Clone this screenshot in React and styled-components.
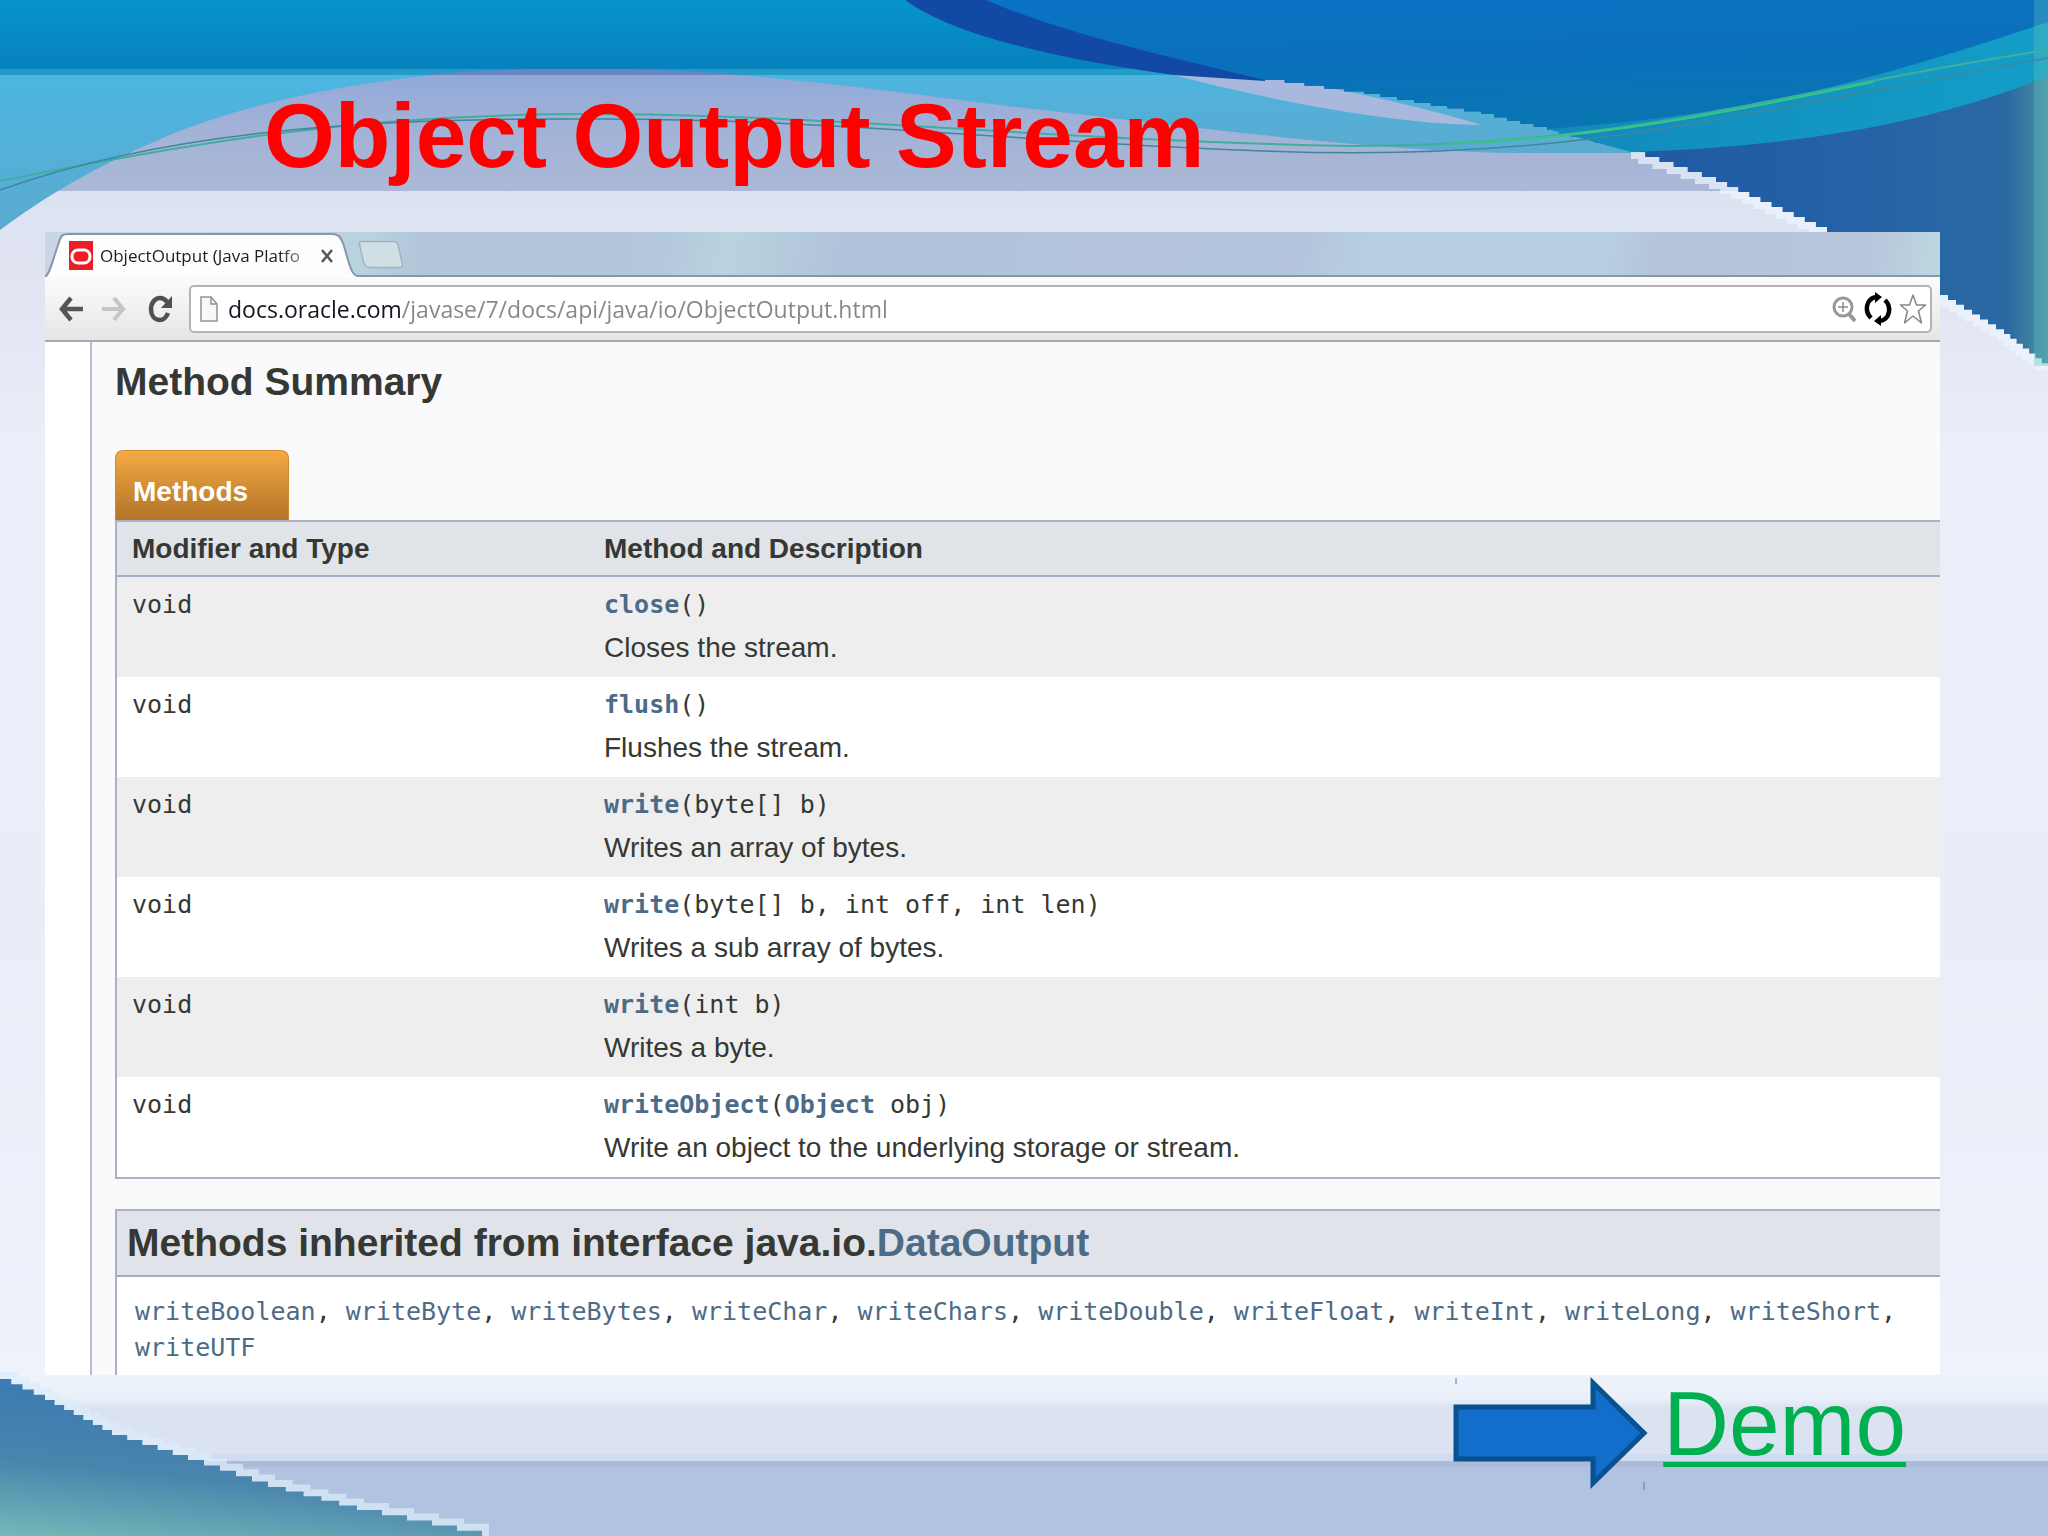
import styled, { createGlobalStyle } from 'styled-components';

const GlobalStyle = createGlobalStyle`
  * {
    box-sizing: border-box;
  }

  body {
    margin: 0;
    font-family: "Liberation Sans", Arial, sans-serif;
    background: #e9eef8;
  }
`;

const Slide = styled.main`
  position: relative;
  isolation: isolate;
  display: flex;
  flex-direction: column;
  min-height: 100vh;
  overflow: hidden;
`;

const Backdrop = styled.svg`
  position: absolute;
  inset: 0;
  z-index: -1;
  width: 100%;
  height: 100%;
`;

const Title = styled.h1`
  margin: 0;
  padding: 84px 264px 44px;
  font-size: 91px;
  line-height: 104px;
  color: #ff0000;
`;

const Browser = styled.section`
  margin: 0 108px 0 45px;
  background: #ffffff;
  overflow: hidden;
`;

const TabStrip = styled.div`
  display: flex;
  align-items: stretch;
  height: 45px;
  border-bottom: 2px solid #8a97a6;
  background: linear-gradient(100deg, #c9d6e6 0%, #b9d2e0 17%, #b2c5da 20%, #b3c6dc 32%, #b9d3df 36%, #b1c3da 42%, #b3c4dc 66%, #b8d0e3 70%, #b9d0e4 82%, #b5c3da 85%, #b8c6dc 96%, #bdd8e0 100%);
`;

const Tab = styled.div`
  position: relative;
  isolation: isolate;
  display: flex;
  align-items: center;
  gap: 7px;
  width: 313px;
  height: 45px;
  padding: 2px 20px 0 24px;
  font-family: "Open Sans", "Noto Sans", sans-serif;
  font-size: 17px;
  color: #1c1c28;
`;

const TabShape = styled.svg`
  position: absolute;
  inset: 0;
  z-index: -1;
  width: 100%;
  height: 100%;
`;

const TabName = styled.span`
  width: 211px;
  white-space: nowrap;
  mask-image: linear-gradient(90deg, #000 85%, rgba(0, 0, 0, 0.3));
`;

const IconButton = styled.button`
  display: grid;
  place-items: center;
  flex: none;
  padding: 0;
  border: none;
  background: none;
  cursor: pointer;

  svg {
    display: block;
  }
`;

const Toolbar = styled.div`
  display: flex;
  align-items: center;
  gap: 14px;
  height: 65px;
  padding: 0 8px 0 12px;
  border-bottom: 2px solid #a9a9ac;
  background: linear-gradient(#fbfbfc, #e7e6e7);
`;

const AddressBar = styled.div`
  display: flex;
  flex: 1;
  align-items: center;
  gap: 4px;
  height: 48px;
  padding: 0 2px 0 8px;
  border: 2px solid #b4b4b8;
  border-radius: 5px;
  background: #ffffff;
`;

const AddressInput = styled.input`
  flex: 1;
  min-width: 0;
  height: 40px;
  padding: 0 0 0 5px;
  border: none;
  outline: none;
  font-family: "Open Sans", "Noto Sans", sans-serif;
  font-size: 23px;
  color: #1f2230;
  background: linear-gradient(90deg, #14161f 179px, #85858a 179px);
  background-clip: text;
  -webkit-text-fill-color: transparent;
`;

const Docs = styled.div`
  margin-left: 45px;
  padding-left: 23px;
  border-left: 2px solid #b9b9d2;
  background: #faf9fc;
  color: #353833;
`;

const SectionTitle = styled.h2`
  margin: 0;
  padding: 18px 0 46px;
  font-size: 39px;
  line-height: 44px;
`;

const MethodsTab = styled.button`
  display: block;
  width: 174px;
  height: 70px;
  padding: 12px 17px 0;
  border: 1px solid #d08a2c;
  border-bottom: none;
  border-radius: 8px 8px 0 0;
  background: linear-gradient(#f5aa43, #b27428);
  color: #ffffff;
  font: bold 28px "Liberation Sans", Arial, sans-serif;
  text-align: left;
`;

const MethodTable = styled.table`
  width: 100%;
  border: 2px solid #aab0c6;
  border-right: none;
  border-collapse: separate;
  border-spacing: 0;
  table-layout: fixed;

  th {
    height: 55px;
    padding: 0 15px;
    border-bottom: 2px solid #a5b0c6;
    background: #e0e3e8;
    font-size: 28px;
    line-height: 40px;
    text-align: left;
  }

  th:first-child {
    width: 472px;
  }

  td {
    height: 100px;
    padding: 6px 15px;
    background: #ffffff;
    vertical-align: top;
  }

  tbody tr:nth-child(odd) td {
    background: #eeeeef;
  }
`;

const Code = styled.code`
  display: block;
  font-family: "DejaVu Sans Mono", monospace;
  font-size: 25px;
  line-height: ${(props) => props.$line || 44}px;
`;

const Description = styled.div`
  font-size: 28px;
  line-height: 42px;
`;

const DocLink = styled.a`
  color: #4c6b87;
  font-weight: ${(props) => (props.$strong ? 'bold' : 'inherit')};
  text-decoration: none;
`;

const Inherited = styled.section`
  margin-top: 30px;
  border: 2px solid #aab0c6;
  border-right: none;
  border-bottom: none;
  background: #ffffff;
`;

const InheritedTitle = styled.h3`
  margin: 0;
  padding: 10px;
  border-bottom: 2px solid #a5a8c2;
  background: #e0e3e9;
  font-size: 39px;
  line-height: 44px;
`;

const InheritedList = styled.div`
  padding: 17px 18px 9px;
`;

const Footer = styled.footer`
  display: flex;
  align-items: flex-start;
  justify-content: flex-end;
  gap: 14px;
  padding: 0 142px 20px 0;
`;

const DemoLink = styled.a`
  font-size: 91px;
  line-height: 98px;
  color: #00b050;
  text-decoration-thickness: 5px;
  text-underline-offset: 7px;
`;

const methods = [
  { name: 'close', args: '()', text: 'Closes the stream.' },
  { name: 'flush', args: '()', text: 'Flushes the stream.' },
  { name: 'write', args: '(byte[] b)', text: 'Writes an array of bytes.' },
  { name: 'write', args: '(byte[] b, int off, int len)', text: 'Writes a sub array of bytes.' },
  { name: 'write', args: '(int b)', text: 'Writes a byte.' },
  {
    name: 'writeObject',
    args: <>(<DocLink href="#Object" $strong>Object</DocLink> obj)</>,
    text: 'Write an object to the underlying storage or stream.',
  },
];

const inherited = [
  'writeBoolean', 'writeByte', 'writeBytes', 'writeChar', 'writeChars', 'writeDouble',
  'writeFloat', 'writeInt', 'writeLong', 'writeShort', 'writeUTF',
];

// turns a line of points into the coarse stairs of the wave edges
const stairs = (points, step) => {
  let d = '';
  for (let i = 0; i < points.length - 1; i++) {
    const [x1, y1] = points[i];
    const [x2, y2] = points[i + 1];
    const n = Math.max(1, Math.round((y2 - y1) / step));
    for (let k = 0; k < n; k++) {
      d += `L${x1 + ((x2 - x1) * k) / n} ${y1 + ((y2 - y1) * k) / n}`;
      d += `H${x1 + ((x2 - x1) * (k + 1)) / n}`;
    }
  }
  const last = points[points.length - 1];
  return `${d}L${last[0]} ${last[1]}`;
};

const upperPoints = [[1265, 80], [1364, 94], [1481, 114], [1547, 130], [1631, 152]];
const lowerPoints = [[1631, 152], [1716, 182], [1827, 232], [1940, 295], [2004, 334], [2048, 368]];

const upperEdge = stairs(upperPoints, 3);
const lowerEdge = stairs(lowerPoints, 5);

const leftEdge = stairs([
  [0, 1379], [45, 1400], [112, 1435], [188, 1460], [268, 1487], [357, 1510], [482, 1536],
], 5);

const Waves = () => (
  <Backdrop viewBox="0 0 2048 1536" preserveAspectRatio="none" aria-hidden="true">
    <defs>
      <linearGradient id="page" x1="0" y1="0" x2="0" y2="1">
        <stop offset="0.12" stopColor="#dae3f2" />
        <stop offset="0.16" stopColor="#dfe3f1" />
        <stop offset="0.3" stopColor="#ebeff9" />
        <stop offset="0.6" stopColor="#e8edf7" />
        <stop offset="0.9" stopColor="#eef2fb" />
      </linearGradient>
      <linearGradient id="sky" x1="0" y1="0" x2="0" y2="1">
        <stop offset="0" stopColor="#0694cc" />
        <stop offset="1" stopColor="#0681bc" />
      </linearGradient>
      <linearGradient id="cyan" x1="0" y1="0" x2="0" y2="1">
        <stop offset="0" stopColor="#4bb6e2" />
        <stop offset="1" stopColor="#5baacf" />
      </linearGradient>
      <linearGradient id="lavender" x1="0" y1="0" x2="0" y2="1">
        <stop offset="0" stopColor="#8fa8d8" />
        <stop offset="0.5" stopColor="#a2b2d7" />
        <stop offset="1" stopColor="#acb9d6" />
      </linearGradient>
      <linearGradient id="deep" x1="0" y1="0" x2="0.2" y2="1">
        <stop offset="0" stopColor="#0a73c4" />
        <stop offset="0.45" stopColor="#0a70bd" />
        <stop offset="1" stopColor="#0877ae" />
      </linearGradient>
      <linearGradient id="navy" x1="0" y1="0" x2="1" y2="0">
        <stop offset="0" stopColor="#174b98" />
        <stop offset="0.7" stopColor="#2360a7" />
        <stop offset="0.95" stopColor="#2c69a3" />
        <stop offset="1" stopColor="#4b93a2" />
      </linearGradient>
      <linearGradient id="ribbon" x1="0" y1="0" x2="1" y2="0">
        <stop offset="0" stopColor="#118abb" />
        <stop offset="1" stopColor="#139ec7" />
      </linearGradient>
      <linearGradient id="corner" x1="0.3" y1="0" x2="0" y2="1">
        <stop offset="0" stopColor="#3a78b2" />
        <stop offset="0.55" stopColor="#4a85ad" />
        <stop offset="1" stopColor="#74b9b8" />
      </linearGradient>
      <linearGradient id="shelf" x1="0" y1="0" x2="0" y2="1">
        <stop offset="0" stopColor="#eef3fa" />
        <stop offset="0.3" stopColor="#eaf0fa" />
        <stop offset="0.42" stopColor="#dbe2ef" />
        <stop offset="1" stopColor="#dbe3f3" />
      </linearGradient>
    </defs>
    <rect width="2048" height="1536" fill="url(#page)" />
    <rect y="69" width="1760" height="122" fill="url(#lavender)" />

    <path d="M0 69V230C60 186 110 160 170 135C261 98 400 69 562 69Z" fill="url(#cyan)" />
    <path d="M562 69C720 66 880 90 1024 108C1180 125 1380 153 1533 153H1660V60H562Z" fill="url(#cyan)" />
    <path d="M1174 75C1260 98 1390 124 1481 125C1440 112 1350 90 1265 76Z" fill="#a9b9dd" />
    <rect width="2048" height="70" fill="url(#sky)" />
    <rect y="69" width="1300" height="6" fill="#259bc7" />
    <path d="M425 75C500 67 660 67 738 75Z" fill="#6a84c4" />

    {/* right wave */}
    <path d={`M1631 152${lowerEdge}`} fill="none" stroke="#eef5ff" strokeWidth="14" opacity="0.7" />
    <path d={`M905 0C960 40 1080 62 1174 75L1265 81${upperEdge}V0Z`} fill="#1149a5" />
    <path d={`M1265 80${upperEdge}${lowerEdge}V0H1265Z`} fill="url(#navy)" />
    <path d={`M986 0C1060 32 1160 55 1265 80${upperEdge}C1800 140 1930 120 2048 76V0Z`} fill="url(#deep)" />
    <path d="M1547 129C1740 115 1850 88 2048 22V76C1930 125 1780 148 1631 152Z" fill="url(#ribbon)" />
    <rect x="2034" width="14" height="366" fill="#5ec0c0" opacity="0.35" />

    <g fill="none" strokeWidth="2">
      <path d="M0 181C180 145 350 114 588 114C820 114 1040 140 1350 146C1640 146 1780 90 2048 50" stroke="#3eae9e" />
      <path d="M0 190C160 133 350 118 588 119C820 118 1040 143 1240 150C1560 165 1700 120 2048 58" stroke="#41869d" strokeWidth="1.5" />
      <path d="M1448 144C1600 138 1720 114 1873 82" stroke="#3bc486" />
    </g>

    {/* bottom shelf and left wave */}
    <rect y="1375" width="2048" height="79" fill="url(#shelf)" />
    <rect y="1454" width="2048" height="7" fill="#d0dcf1" />
    <rect y="1461" width="2048" height="75" fill="#b2c3e2" />
    <rect y="1461" width="2048" height="6" fill="#adbbd8" />
    <path d={`M0 1379${leftEdge}`} fill="none" stroke="#dcecfb" strokeWidth="14" opacity="0.7" />
    <path d={`M0 1379${leftEdge}H0Z`} fill="url(#corner)" />
  </Backdrop>
);

const App = () => (
  <>
    <GlobalStyle />
    <Slide>
      <Waves />
      <Title>Object Output Stream</Title>

      <Browser>
        <TabStrip>
          <Tab>
            <TabShape viewBox="0 0 313 45" preserveAspectRatio="none" aria-hidden="true">
              <path d="M0 45C5 42 7 30 14 10C16 3 18 2 23 2H287C293 2 295 4 298 11C304 30 306 44 313 45Z" fill="#fdfdfe" />
              <path d="M0 45C5 42 7 30 14 10C16 3 18 2 23 2H287C293 2 295 4 298 11C304 30 306 44 313 44" fill="none" stroke="#8a97a8" strokeWidth="2" />
            </TabShape>
            <svg width="24" height="29" viewBox="0 0 24 29" aria-hidden="true">
              <rect width="24" height="29" fill="#ee1c25" />
              <rect x="3" y="9" width="18" height="13" rx="6" fill="none" stroke="#fff" strokeWidth="3" />
            </svg>
            <TabName>ObjectOutput (Java Platfo</TabName>
            <IconButton aria-label="Close tab">
              <svg width="18" height="14" viewBox="0 0 18 14">
                <path d="M4 1L14 13M14 1L4 13" stroke="#555" strokeWidth="2.5" />
              </svg>
            </IconButton>
          </Tab>
          <IconButton aria-label="New tab">
            <svg width="46" height="34" viewBox="0 0 48 34">
              <path d="M4 4H36C40 4 41 5 42 8L46 26C47 30 46 31 43 31H12C8 31 7 29 6 26L2 9C1 6 1 4 4 4Z" fill="#d0dfe4" stroke="#9fb2bd" strokeWidth="1.5" />
            </svg>
          </IconButton>
        </TabStrip>

        <Toolbar>
          <IconButton aria-label="Back">
            <svg width="28" height="30" viewBox="0 0 28 30">
              <path d="M26 15H5M14 4L5 15L14 26" fill="none" stroke="#555" strokeWidth="4.5" />
            </svg>
          </IconButton>
          <IconButton aria-label="Forward">
            <svg width="28" height="30" viewBox="0 0 28 30">
              <path d="M3 15H24M15 4L24 15L15 26" fill="none" stroke="#c6c6c8" strokeWidth="4" />
            </svg>
          </IconButton>
          <IconButton aria-label="Reload">
            <svg width="34" height="30" viewBox="0 0 34 30">
              <path d="M27 19C25 24 22 26 19 26C13 26 10 21 10 15C10 9 14 4 19 4C22 4 24 5 26 8" fill="none" stroke="#505052" strokeWidth="4.5" />
              <path d="M31 2V14H20Z" fill="#505052" />
            </svg>
          </IconButton>
          <AddressBar>
            <svg width="20" height="28" viewBox="0 0 20 28" aria-hidden="true">
              <path d="M2 2H12L18 9V26H2ZM12 2V9H18" fill="#f8f8f8" stroke="#929294" strokeWidth="1.5" />
            </svg>
            <AddressInput
              type="text"
              aria-label="Address"
              spellCheck={false}
              defaultValue="docs.oracle.com/javase/7/docs/api/java/io/ObjectOutput.html"
            />
            <IconButton aria-label="Zoom">
              <svg width="28" height="32" viewBox="0 0 28 32">
                <circle cx="13" cy="14" r="9" fill="none" stroke="#98989a" strokeWidth="3" />
                <path d="M13 9V19M8 14H18" stroke="#8b8b8d" strokeWidth="1.5" />
                <path d="M19 21L25 28" stroke="#98989a" strokeWidth="4" />
              </svg>
            </IconButton>
            <IconButton aria-label="Sync">
              <svg width="32" height="34" viewBox="0 0 32 34">
                <path d="M9 26C2 19 4 7 14 5M23 8C30 15 28 27 18 29" fill="none" stroke="#000" strokeWidth="4.5" />
                <path d="M13 0L20 5L13 11ZM19 23V34L12 29Z" fill="#000" />
              </svg>
            </IconButton>
            <IconButton aria-label="Bookmark">
              <svg width="30" height="34" viewBox="0 0 30 34">
                <path d="M15 3L18.500 13H27.500L20.500 19L23.500 31L15 24L6.500 31L9.500 19L2.500 13H11.500Z" fill="#fff" stroke="#868688" strokeWidth="1.500" strokeLinejoin="round" />
              </svg>
            </IconButton>
          </AddressBar>
        </Toolbar>

        <Docs>
          <SectionTitle>Method Summary</SectionTitle>
          <MethodsTab>Methods</MethodsTab>
          <MethodTable>
            <thead>
              <tr>
                <th scope="col">Modifier and Type</th>
                <th scope="col">Method and Description</th>
              </tr>
            </thead>
            <tbody>
              {methods.map((method) => (
                <tr key={method.text}>
                  <td><Code>void</Code></td>
                  <td>
                    <Code>
                      <DocLink href={`#${method.name}`} $strong>{method.name}</DocLink>
                      {method.args}
                    </Code>
                    <Description>{method.text}</Description>
                  </td>
                </tr>
              ))}
            </tbody>
          </MethodTable>

          <Inherited>
            <InheritedTitle>
              Methods inherited from interface java.io.<DocLink href="#DataOutput">DataOutput</DocLink>
            </InheritedTitle>
            <InheritedList>
              <Code $line={36}>
                {inherited.map((name, i) => (
                  <span key={name}>
                    {i > 0 && ', '}
                    <DocLink href={`#${name}`}>{name}</DocLink>
                  </span>
                ))}
              </Code>
            </InheritedList>
          </Inherited>
        </Docs>
      </Browser>

      <Footer>
        <svg width="196" height="116" viewBox="0 0 196 116" aria-hidden="true">
          <path d="M3 32H140V8L191 58L140 108V84H3Z" fill="#126dcb" stroke="#08528f" strokeWidth="5" />
          <path d="M3 3V9M191 107V115" stroke="#65749a" strokeWidth="1" />
        </svg>
        <DemoLink href="#demo">Demo</DemoLink>
      </Footer>
    </Slide>
  </>
);

export default App;
